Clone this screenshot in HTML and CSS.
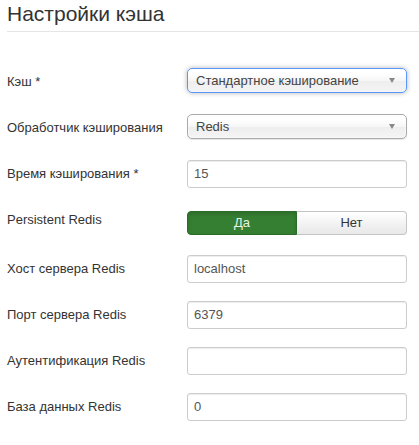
FILE: index.html
```html
<!DOCTYPE html>
<html lang="ru">
<head>
<meta charset="utf-8">
<link rel="stylesheet" href="styles.css">
</head>
<body>
<div class="page">
  <div class="legend">Настройки кэша</div>
  <div class="form">
    <div class="group">
      <div class="label">Кэш *</div>
      <div class="controls">
        <div class="select focused"><span>Стандартное кэширование</span><i class="arrow"></i></div>
      </div>
    </div>
    <div class="group">
      <div class="label">Обработчик кэширования</div>
      <div class="controls">
        <div class="select"><span>Redis</span><i class="arrow"></i></div>
      </div>
    </div>
    <div class="group">
      <div class="label">Время кэширования *</div>
      <div class="controls"><div class="input">15</div></div>
    </div>
    <div class="group group-toggle">
      <div class="label">Persistent Redis</div>
      <div class="controls">
        <div class="toggle">
          <div class="btn yes">Да</div>
          <div class="btn no">Нет</div>
        </div>
      </div>
    </div>
    <div class="group">
      <div class="label">Хост сервера Redis</div>
      <div class="controls"><div class="input">localhost</div></div>
    </div>
    <div class="group">
      <div class="label">Порт сервера Redis</div>
      <div class="controls"><div class="input">6379</div></div>
    </div>
    <div class="group">
      <div class="label">Аутентификация Redis</div>
      <div class="controls"><div class="input"></div></div>
    </div>
    <div class="group">
      <div class="label">База данных Redis</div>
      <div class="controls"><div class="input">0</div></div>
    </div>
  </div>
</div>
</body>
</html>
```

FILE: styles.css
```css
html, body {
  margin: 0;
  padding: 0;
  background: #fff;
}
body {
  font-family: "Liberation Sans", Arial, sans-serif;
  font-size: 13px;
  color: #333;
}
.page {
  padding-left: 7px;
}
.legend {
  font-size: 21px;
  line-height: 28px;
  padding-bottom: 3px;
  border-bottom: 1px solid #e5e5e5;
  color: #333;
}
.form {
  padding-top: 36px;
}
.group {
  display: flex;
  height: 28px;
  margin-bottom: 18px;
}
.group-toggle {
  height: 31px;
}
.label {
  width: 180px;
  padding-top: 5px;
  line-height: 18px;
  color: #333;
}
.controls {
  width: 220px;
}
.select {
  position: relative;
  box-sizing: border-box;
  height: 25px;
  border: 1px solid #aaa;
  border-radius: 5px;
  background: linear-gradient(#ffffff 20%, #f6f6f6 50%, #eeeeee 52%, #f4f4f4);
  box-shadow: 0 0 3px #fff inset, 0 1px 1px rgba(0,0,0,0.1);
  padding-left: 8px;
  line-height: 23px;
  color: #444;
}
.select.focused {
  border-color: #5897fb;
  box-shadow: 0 0 5px rgba(0,0,0,0.3);
}
.arrow {
  position: absolute;
  right: 11px;
  top: 9px;
  width: 0;
  height: 0;
  border-left: 3.5px solid transparent;
  border-right: 3.5px solid transparent;
  border-top: 5px solid #888;
}
.input {
  box-sizing: border-box;
  height: 28px;
  border: 1px solid #ccc;
  border-radius: 3px;
  padding: 4px 6px;
  line-height: 18px;
  color: #555;
  box-shadow: inset 0 1px 1px rgba(0,0,0,0.075);
}
.toggle {
  display: flex;
  margin-top: 5px;
  height: 24px;
}
.btn {
  box-sizing: border-box;
  width: 50%;
  height: 24px;
  line-height: 22px;
  text-align: center;
  font-size: 13px;
}
.yes {
  background: #357f32;
  border: 1px solid #2b6b28;
  border-radius: 4px 0 0 4px;
  color: #e8f2e8;
  box-shadow: inset 0 2px 4px rgba(0,0,0,0.15);
}
.no {
  background: linear-gradient(#ffffff, #e8e8e8);
  border: 1px solid #c5c5c5;
  border-left: none;
  border-radius: 0 4px 4px 0;
  color: #333;
}
```
